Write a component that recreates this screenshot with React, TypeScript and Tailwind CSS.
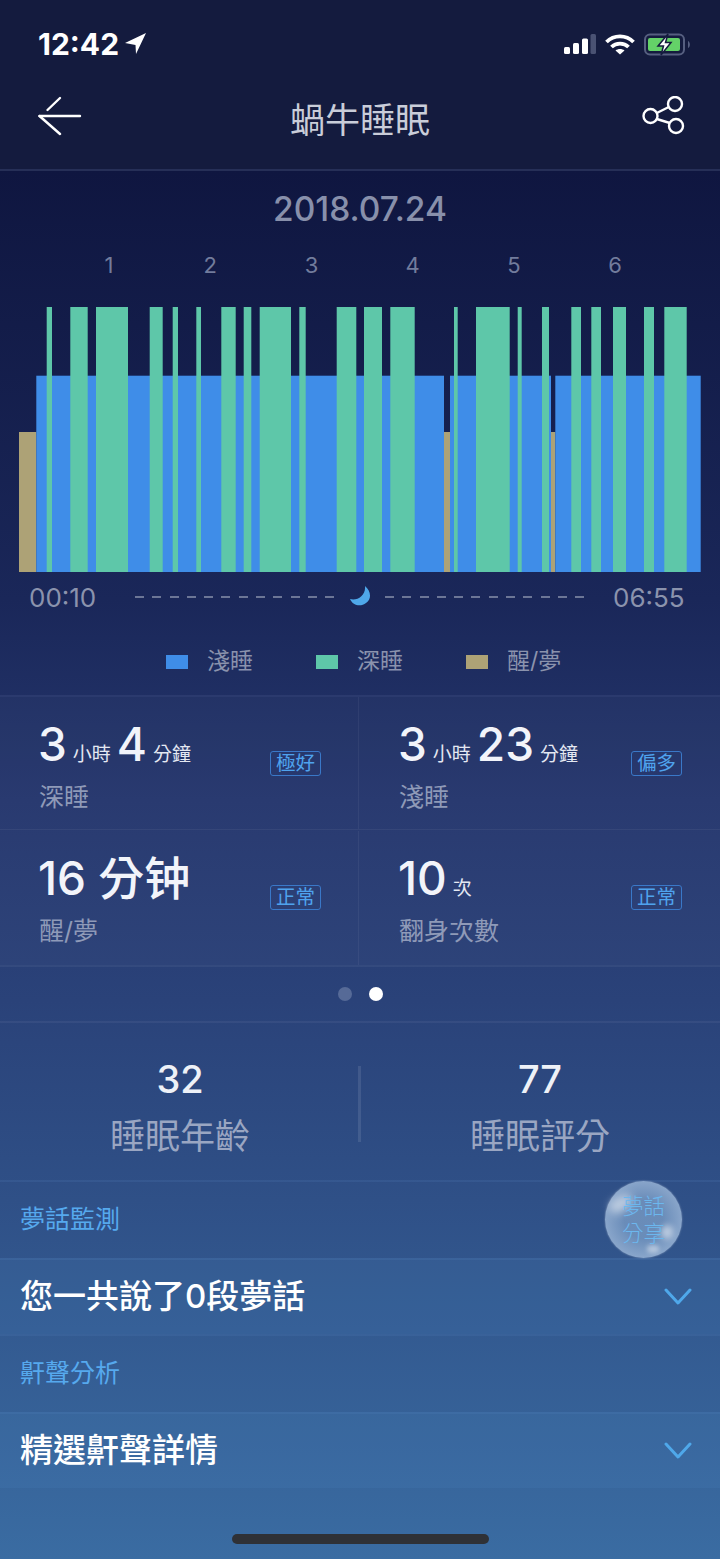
import React from 'react';

const CJK = "font-['Inter','Noto_Sans_CJK_TC',sans-serif]";

const greens = [
  [46.7, 52], [70.3, 87.7], [96, 128], [149.7, 162.7], [172.7, 178], [196.3, 201],
  [221.3, 235.7], [243.7, 251.3], [259.7, 291], [299.3, 305.7], [336.7, 356.3],
  [364, 382], [390.3, 414.7], [454, 457.7], [476, 509.7], [517.7, 521.7], [542, 549],
  [571.3, 581], [591.3, 601], [613, 626], [644, 654], [664.3, 686.7],
];
const blues = [[36.3, 444], [450, 551], [555.3, 700.7]];
const tans = [[19, 36.3], [444, 450], [551, 555.3]];

function SleepChart() {
  return (
    <svg width="720" height="266" viewBox="0 306 720 266" className="block">
      {tans.map(([a, b]) => (
        <rect key={a} x={a} y={432} width={b - a} height={140} fill="#ada276" />
      ))}
      {blues.map(([a, b]) => (
        <rect key={a} x={a} y={375.7} width={b - a} height={196.3} fill="#3f8de8" />
      ))}
      {greens.map(([a, b]) => (
        <rect key={a} x={a} y={307} width={b - a} height={265} fill="#5ec7a9" />
      ))}
    </svg>
  );
}

function Stat({ children, label, tag, right }: { children: React.ReactNode; label: string; tag: string; right?: boolean }) {
  return (
    <div className={`relative h-full pt-[16px] ${right ? 'pl-[40px]' : 'pl-[39px] border-r border-white/5'}`}>
      <div className="flex items-baseline h-[62px] -ml-[1px] text-white">{children}</div>
      <div className="text-[25px] leading-[44px] text-[#8f9ab8]">{label}</div>
      <span className={`absolute top-[54px] ${right ? 'left-[272px]' : 'left-[270px]'} w-[51px] h-[25px] rounded-[3px] border border-[#3a78c8] text-[#4fa3ee] text-[19.500px] leading-[22px] text-center`}>
        {tag}
      </span>
    </div>
  );
}

const Big = ({ children }: { children: React.ReactNode }) => <span className="text-[46px] font-medium leading-[62px] text-[#f2f4fa]">{children}</span>;
const Unit = ({ children }: { children: React.ReactNode }) => <span className="text-[19px] text-[#e4e8f2] mx-[6px]">{children}</span>;

function Chevron() {
  return (
    <svg width="28" height="18" viewBox="0 0 28 18" fill="none" stroke="#4fa8ea" strokeWidth="3" strokeLinecap="round" strokeLinejoin="round">
      <path d="M2 2 L14 15 L26 2" />
    </svg>
  );
}

export default function App() {
  return (
    <div className={`relative w-[720px] h-[1559px] overflow-hidden bg-[linear-gradient(180deg,#0f1640_171px,#1a2759_600px,#25376e_800px,#2a4279_1000px,#2f5087_1200px,#3a6ca2_1559px)] ${CJK}`}>
      {/* status bar + nav */}
      <div className="h-[171px] bg-[#141b3e] border-b-2 border-[#262f57]">
        <div className="flex items-center justify-between h-[86px] pl-[38px] pr-[28px] pt-[2px]">
          <div className="flex items-center text-white font-bold text-[30px]">
            12:42
            <svg width="24" height="24" viewBox="0 0 24 24" className="ml-[5px]" fill="#fff">
              <path d="M22 1 L1 11 L11.500 13 L12 22 Z" />
            </svg>
          </div>
          <div className="flex items-center gap-[9px]">
            <svg width="33" height="22" viewBox="0 0 33 22">
              <rect x="1" y="14" width="6" height="7" rx="1.500" fill="#fff" />
              <rect x="10" y="10" width="6" height="11" rx="1.500" fill="#fff" />
              <rect x="19" y="5.500" width="6" height="15.500" rx="1.500" fill="#fff" />
              <rect x="27.500" y="1" width="5.500" height="20" rx="1.500" fill="#4a5273" />
            </svg>
            <svg width="30" height="22" viewBox="0 0 30 22" fill="none" stroke="#fff" strokeWidth="3.800">
              <path d="M1.500 9 C9 1.500 21 1.500 28.500 9" />
              <path d="M6.500 14 C11 9.500 19 9.500 23.500 14" />
              <path d="M15 21.500 L10.500 17.500 C13 15.500 17 15.500 19.500 17.500 Z" fill="#fff" stroke="none" />
            </svg>
            <svg width="48" height="23" viewBox="0 0 48 23" fill="none">
              <rect x="1" y="1.500" width="39" height="20" rx="5" stroke="#565f80" strokeWidth="2" />
              <rect x="4" y="5" width="32" height="13" rx="2" fill="#64d268" />
              <path d="M44 8 C46.500 9 46.500 14 44 15 Z" fill="#565f80" />
              <path d="M24 1 L14 13 L19.500 13 L17 22 L27 9.500 L21.500 9.500 Z" fill="#fff" stroke="#141b3e" strokeWidth="1.500" />
            </svg>
          </div>
        </div>
        <div className="relative flex items-center justify-between h-[83px] pb-[23px] pl-[38px] pr-[34px]">
          <svg width="44" height="40" viewBox="0 0 44 40" fill="none" stroke="#fff" strokeWidth="2.400" strokeLinecap="round">
            <path d="M22 2 L9.500 14" />
            <path d="M1.500 20 L42 20" />
            <path d="M1.500 20 L22 38" />
          </svg>
          <span className="absolute left-0 right-0 top-[17px] text-center text-[35px] leading-[35px] text-[#c9cdd9]">蝸牛睡眠</span>
          <svg width="44" height="40" viewBox="0 0 44 40" fill="none" stroke="#fff" strokeWidth="2.400">
            <circle cx="8.500" cy="20" r="7" />
            <circle cx="33" cy="8" r="7" />
            <circle cx="34" cy="30" r="7" />
            <path d="M14.800 17 L26.800 11" />
            <path d="M14.800 23 L27.800 27" />
          </svg>
        </div>
      </div>

      {/* chart */}
      <div className="h-[526px] border-b-2 border-[#2b3a6e]">
        <div className="pt-[18px] h-[68px] text-center text-[33.500px] font-medium leading-[40px] text-[#8890ab]">2018.07.24</div>
        <div className="flex h-[67px] pl-[58.500px] text-[22px] text-[#727c9c] leading-[52px]">
          {['1', '2', '3', '4', '5', '6'].map(n => (
            <span key={n} className="w-[101.200px] text-center">{n}</span>
          ))}
        </div>
        <SleepChart />
        <div className="flex items-center h-[50px] pl-[29px] text-[26px] text-[#8b93ad]">
          <span className="w-[106px]">00:10</span>
          <div className="flex items-center gap-[14px] w-[450px]">
            <div className="flex-1 h-[2px] bg-[repeating-linear-gradient(90deg,#6c7696_0_9px,transparent_9px_17.300px)]"></div>
            <svg width="22" height="22" viewBox="0 0 22 22" className="-mt-[2px]">
              <path d="M16 1 C22 6 23 14 17 18 C12 22 4 21 1 14 C8 16 17 11 16 1 Z" fill="#4fa8ea" />
            </svg>
            <div className="flex-1 h-[2px] bg-[repeating-linear-gradient(90deg,#6c7696_0_9px,transparent_9px_17.300px)]"></div>
          </div>
          <span className="ml-[28px]">06:55</span>
        </div>
        <div className="flex items-center h-[73px] pt-[6px] pl-[166px] text-[23px] text-[#8b93ad]">
          <span className="w-[22px] h-[14px] bg-[#3f8de8]"></span>
          <span className="ml-[19px] w-[109px]">淺睡</span>
          <span className="w-[22px] h-[14px] bg-[#5ec7a9]"></span>
          <span className="ml-[19px] w-[109px]">深睡</span>
          <span className="w-[22px] h-[14px] bg-[#ada276]"></span>
          <span className="ml-[19px]">醒/夢</span>
        </div>
      </div>

      {/* stats */}
      <div className="grid grid-cols-[359px_361px] bg-white/[0.02]">
        <div className="h-[133px] border-b border-white/5">
          <Stat label="深睡" tag="極好">
            <Big>3</Big><Unit>小時</Unit><Big>4</Big><Unit>分鐘</Unit>
          </Stat>
        </div>
        <div className="h-[133px] border-b border-white/5">
          <Stat label="淺睡" tag="偏多" right>
            <Big>3</Big><Unit>小時</Unit><Big>23</Big><Unit>分鐘</Unit>
          </Stat>
        </div>
        <div className="h-[135px] pt-px">
          <Stat label="醒/夢" tag="正常">
            <Big>16 分钟</Big>
          </Stat>
        </div>
        <div className="h-[135px] pt-px">
          <Stat label="翻身次數" tag="正常" right>
            <Big>10</Big><Unit>次</Unit>
          </Stat>
        </div>
      </div>

      <div className="flex items-center justify-center gap-[17px] h-[58px] border-y-2 border-white/5">
        <span className="w-[14px] h-[14px] rounded-full bg-[#566a97]"></span>
        <span className="w-[14px] h-[14px] rounded-full bg-white"></span>
      </div>

      {/* score */}
      <div className="relative grid grid-cols-2 h-[157px] text-center">
        <div className="pt-[30px]">
          <div className="text-[38px] leading-[52px] font-medium text-[#eef1f7]">32</div>
          <div className="mt-[4px] text-[35px] leading-[54px] text-[#9aa6c2]">睡眠年齡</div>
        </div>
        <div className="pt-[30px]">
          <div className="text-[38px] leading-[52px] font-medium text-[#eef1f7]">77</div>
          <div className="mt-[4px] text-[35px] leading-[54px] text-[#9aa6c2]">睡眠評分</div>
        </div>
        <div className="absolute left-[358px] top-[43px] w-[3px] h-[76px] bg-white/10"></div>
      </div>

      {/* rows */}
      <div className="relative">
        <div className="flex items-center h-[78px] pl-[20px] border-t-2 border-[#5f8fc8]/15 text-[25px] text-[#56a9ee]">夢話監測</div>
        <div className="flex items-center justify-between h-[76px] pl-[20px] pr-[28px] border-t-2 border-[#5f8fc8]/15 bg-[#5a9ad8]/10 text-[33px] font-medium text-white">
          <span>您一共說了0段夢話</span>
          <Chevron />
        </div>
        <div className="flex items-center h-[78px] pl-[20px] border-t-2 border-[#5f8fc8]/15 text-[25px] text-[#56a9ee]">鼾聲分析</div>
        <div className="flex items-center justify-between h-[76px] pl-[20px] pr-[28px] border-t-2 border-[#5f8fc8]/15 bg-[#5a9ad8]/10 text-[33px] font-medium text-white">
          <span>精選鼾聲詳情</span>
          <Chevron />
        </div>

        {/* bubble */}
        <div className="absolute left-[605px] top-[1px] w-[77px] h-[77px] rounded-full flex items-center justify-center text-center text-[21.500px] leading-[26.500px] text-[#6cb7ee] font-light bg-[radial-gradient(circle_at_50%_50%,rgba(130,165,205,0.7)_35%,rgba(170,195,225,0.8)_80%,rgba(215,228,240,0.95)_100%)] shadow-[0_0_2px_rgba(255,255,255,0.4)]">
          <span className="absolute left-[4px] top-[16px] w-[24px] h-[14px] rounded-full bg-white/50 blur-[4px] -rotate-30"></span>
          <span className="absolute left-[56px] top-[44px] w-[12px] h-[14px] rounded-full bg-white/50 blur-[3px]"></span>
          <span className="absolute left-[42px] top-[64px] w-[12px] h-[8px] rounded-full bg-white/40 blur-[2px]"></span>
          <span className="relative">夢話<br />分享</span>
        </div>
      </div>

      <div className="absolute left-[232px] top-[1534px] w-[257px] h-[10px] rounded-full bg-[#2f3136]"></div>
    </div>
  );
}
